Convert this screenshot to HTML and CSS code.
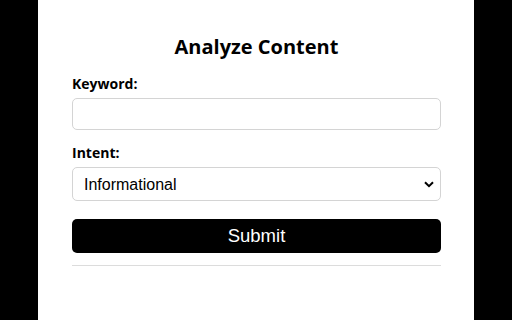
FILE: index.html
```html
<!DOCTYPE html>
<html lang="en">
<head>
<meta charset="utf-8">
<title>Analyze Content</title>
<link rel="stylesheet" href="styles.css">
</head>
<body>
<div class="panel">
  <h2 class="title">Analyze Content</h2>
  <form class="form">
    <div class="group">
      <label class="label" for="keyword">Keyword:</label>
      <input class="field" id="keyword" type="text">
    </div>
    <div class="group">
      <label class="label" for="intent">Intent:</label>
      <div class="select-wrap">
        <select class="field select" id="intent">
          <option>Informational</option>
          <option>Navigational</option>
          <option>Transactional</option>
          <option>Commercial</option>
        </select>
        <svg class="chevron" width="10" height="7" viewBox="0 0 10 7"><path d="M1 1.2 L5 5.2 L9 1.2" fill="none" stroke="#000" stroke-width="2"/></svg>
      </div>
    </div>
    <button class="submit" type="button">Submit</button>
  </form>
  <hr class="divider">
</div>
</body>
</html>
```
FILE: styles.css
```css
html, body {
  margin: 0;
  padding: 0;
  background: #000;
  height: 100%;
}
.panel {
  width: 436px;
  height: 320px;
  margin: 0 auto;
  background: #fff;
  box-sizing: border-box;
  padding: 35px 33px 0 34px;
  font-family: "Open Sans", "Noto Sans", sans-serif;
  color: #000;
}
.title {
  margin: 0;
  font-size: 20px;
  line-height: 24px;
  font-weight: 700;
  text-align: center;
}
.form {
  margin-top: 16px;
  display: flex;
  flex-direction: column;
}
.group {
  display: flex;
  flex-direction: column;
  margin-bottom: 14px;
}
.label {
  font-size: 14px;
  line-height: 17px;
  font-weight: 700;
  margin-bottom: 6px;
}
.field {
  box-sizing: border-box;
  width: 100%;
  height: 32px;
  border: 1px solid #d4d4d4;
  border-radius: 5px;
  background: #fff;
  font-family: "Liberation Sans", Arial, sans-serif;
  font-size: 16px;
  padding: 0 11px;
  color: #000;
  margin: 0;
  outline: none;
}
.select-wrap {
  position: relative;
}
.select {
  height: 34px;
  appearance: none;
  -webkit-appearance: none;
  display: block;
}
.chevron {
  position: absolute;
  right: 7px;
  top: 14px;
}
.submit {
  margin-top: 4px;
  height: 34px;
  border: none;
  border-radius: 5px;
  background: #000;
  color: #fff;
  font-family: "Liberation Sans", Arial, sans-serif;
  font-size: 18.5px;
  line-height: 34px;
  padding: 0 0 1px;
}
.divider {
  margin: 12px 0 0;
  border: none;
  border-top: 1px solid #dcdcdc;
  height: 0;
}
```
